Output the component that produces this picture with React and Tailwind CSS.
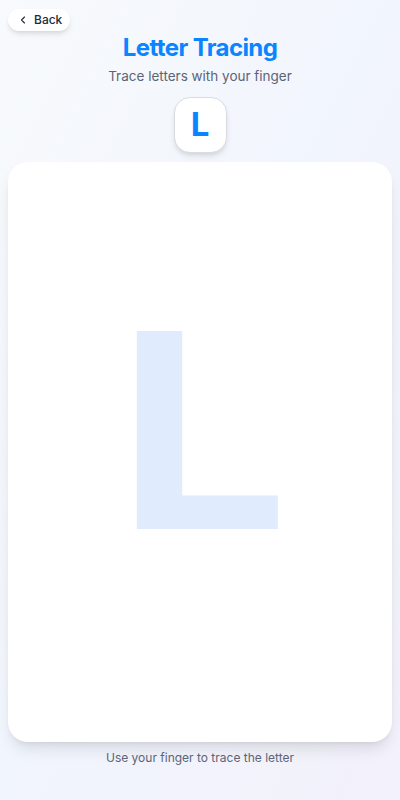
import { ChevronLeft } from "lucide-react";

export default function App() {
  return (
    <div
      className="min-h-screen w-full bg-gradient-to-br from-[#f8fafc] via-[#f1f5fd] to-[#f3f1fb] px-2 flex flex-col"
      style={{ fontFamily: "Inter, 'Noto Sans', sans-serif" }}
    >
      <div className="pt-[9px]">
        <button className="h-[22px] flex items-center gap-[5px] pl-[9px] pr-[8px] bg-white rounded-full shadow-md text-[12px] text-[#1f2937] font-medium">
          <ChevronLeft size={12} strokeWidth={2.2} />
          <span>Back</span>
        </button>
      </div>

      <h1 className="mt-[3px] text-center text-[24px] leading-[28px] font-bold text-[#0a84ff] tracking-tight">
        Letter Tracing
      </h1>
      <p className="mt-[4px] text-center text-[13.5px] leading-[20px] text-[#5b6477]">
        Trace letters with your finger
      </p>

      <div className="mt-[11px] flex justify-center">
        <div className="w-[53px] h-[56px] bg-white rounded-2xl border border-[#d9dde3] shadow-md flex items-center justify-center text-[33px] font-bold text-[#0a84ff]">
          L
        </div>
      </div>

      <div className="mt-[9px] h-[580px] bg-white rounded-[20px] shadow-lg flex items-center justify-center overflow-hidden">
        <span className="inline-block scale-x-[1.12] text-[272px] leading-none font-bold text-[#e0ecfd] -mr-[5px] pb-[44px] select-none">
          L
        </span>
      </div>

      <p className="mt-[8px] text-center text-[12px] leading-[16px] text-[#5b6477]">
        Use your finger to trace the letter
      </p>
    </div>
  );
}
